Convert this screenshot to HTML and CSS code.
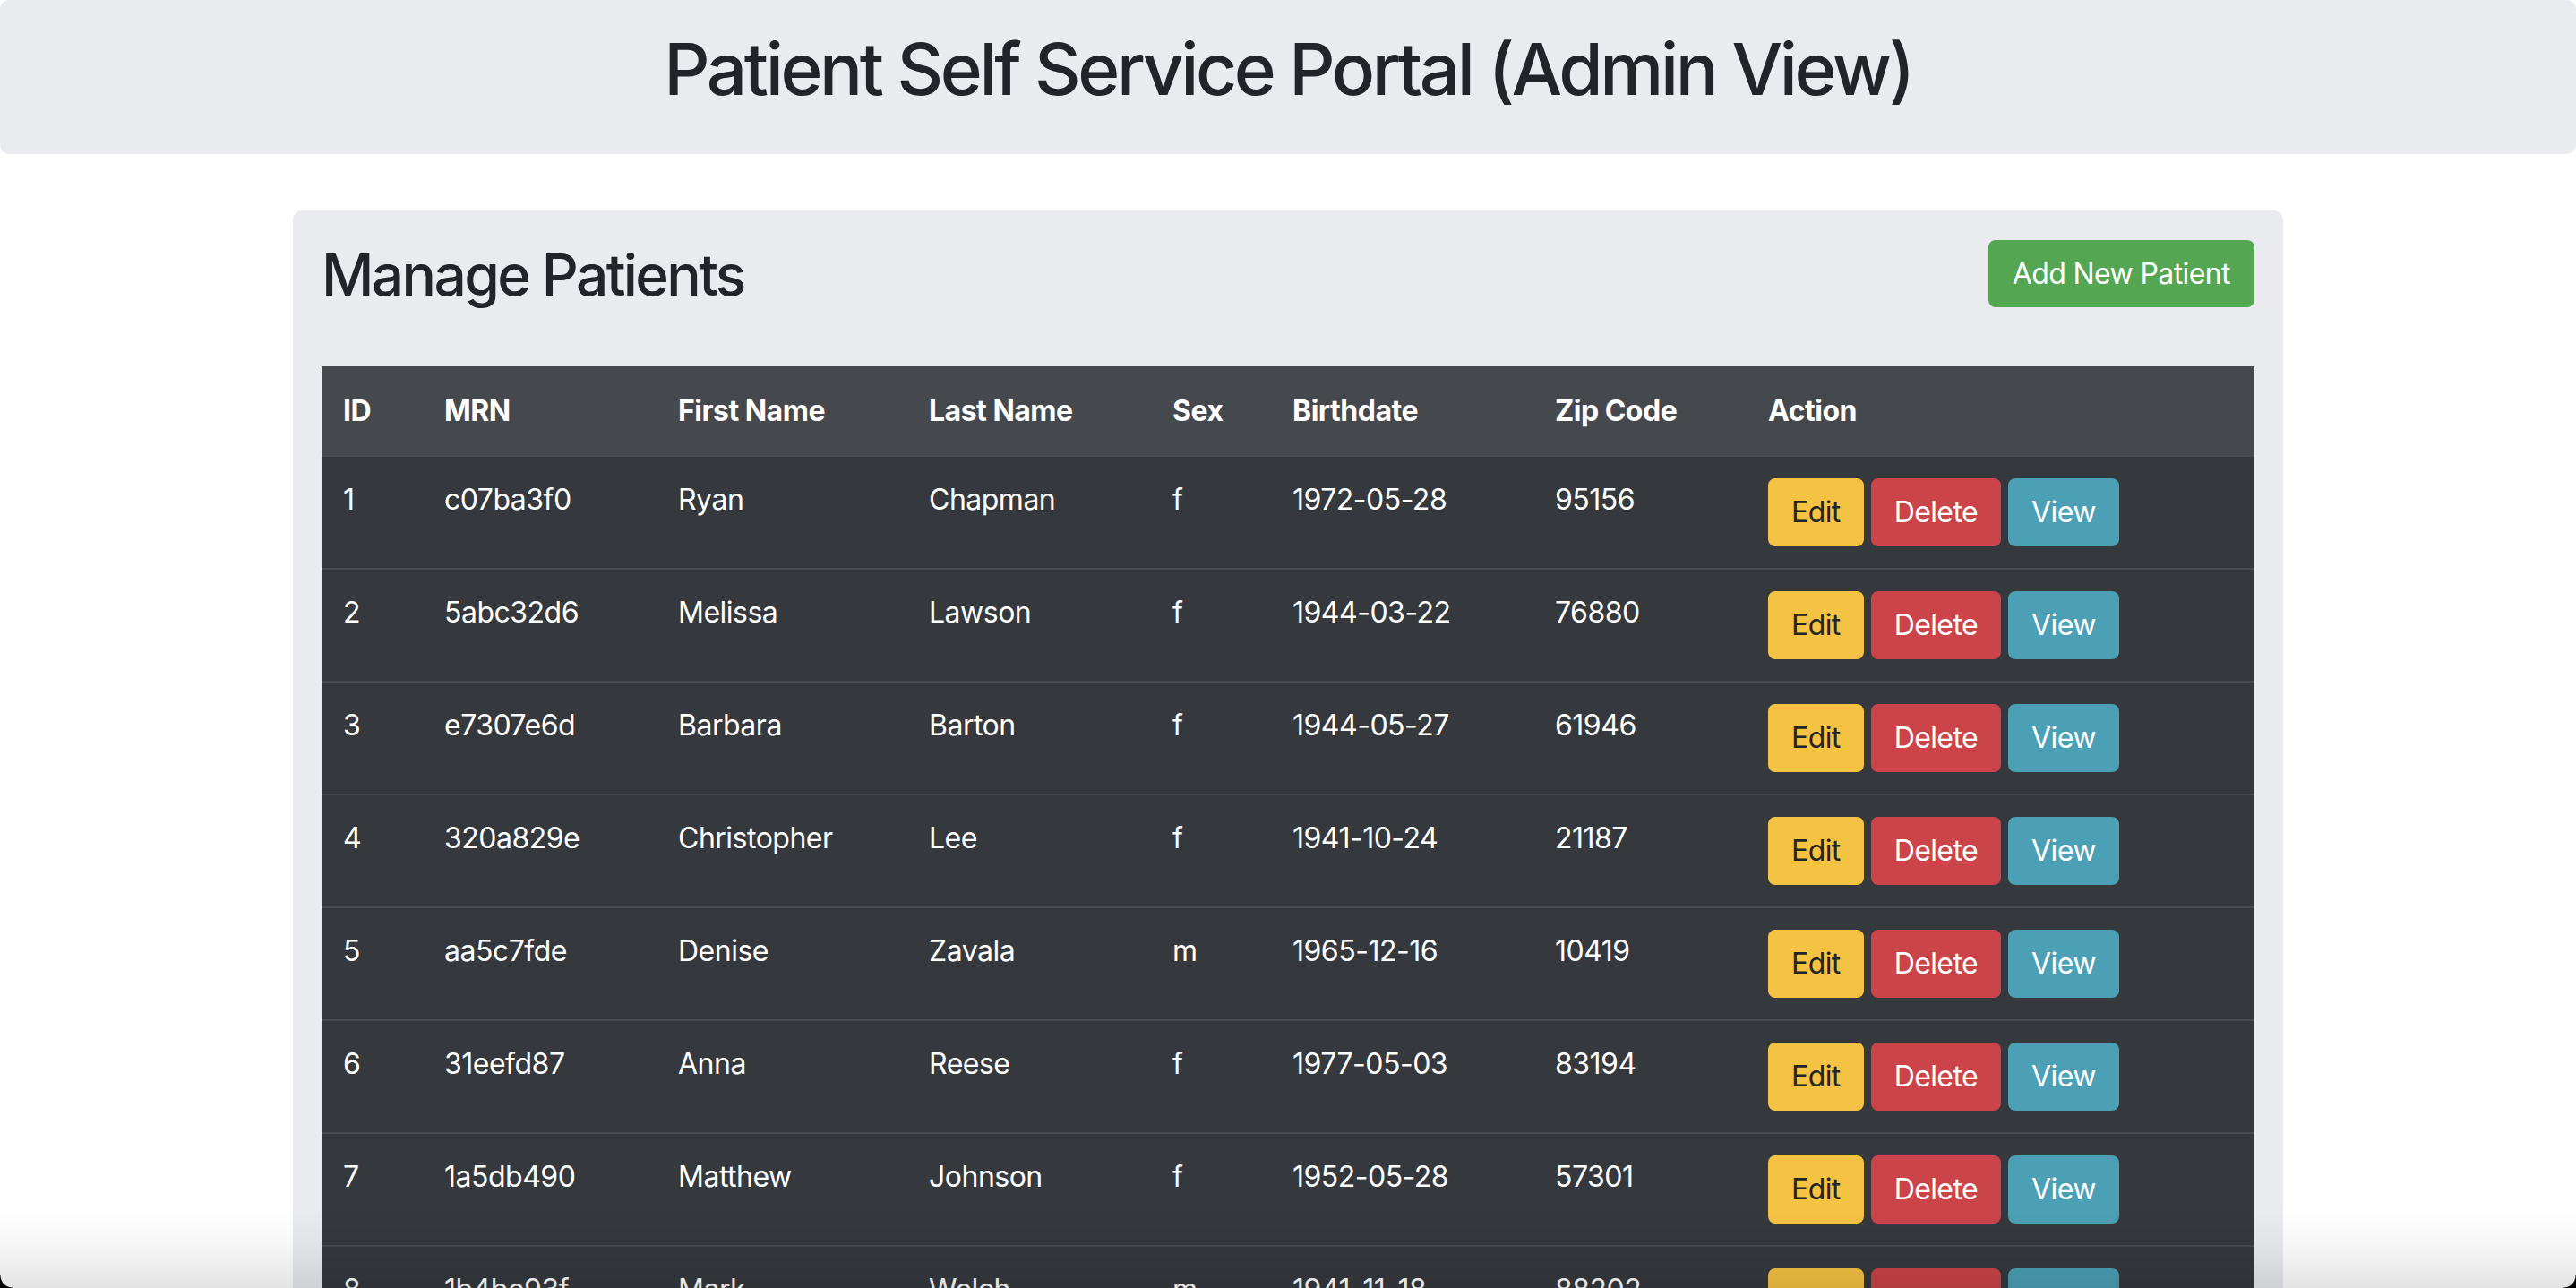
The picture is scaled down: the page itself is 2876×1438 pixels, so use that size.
FILE: index.html
```html
<!DOCTYPE html>
<html lang="en">
<head>
<meta charset="utf-8">
<title>Patient Self Service Portal (Admin View)</title>
<link rel="stylesheet" href="styles.css">
</head>
<body>
<header class="jumbo">
  <h1 class="title">Patient Self Service Portal (Admin View)</h1>
</header>
<main class="card">
  <div class="card-head">
    <h2 class="card-title">Manage Patients</h2>
    <button class="btn btn-success">Add New Patient</button>
  </div>
  <table class="table">
    <colgroup>
      <col class="c-id"><col class="c-mrn"><col class="c-first"><col class="c-last"><col class="c-sex"><col class="c-birth"><col class="c-zip"><col class="c-action">
    </colgroup>
    <thead>
      <tr><th>ID</th><th>MRN</th><th>First Name</th><th>Last Name</th><th>Sex</th><th>Birthdate</th><th>Zip Code</th><th>Action</th></tr>
    </thead>
    <tbody>
      <tr><td>1</td><td>c07ba3f0</td><td>Ryan</td><td>Chapman</td><td>f</td><td>1972-05-28</td><td>95156</td><td><div class="actions"><button class="btn btn-warning">Edit</button><button class="btn btn-danger">Delete</button><button class="btn btn-info">View</button></div></td></tr>
      <tr><td>2</td><td>5abc32d6</td><td>Melissa</td><td>Lawson</td><td>f</td><td>1944-03-22</td><td>76880</td><td><div class="actions"><button class="btn btn-warning">Edit</button><button class="btn btn-danger">Delete</button><button class="btn btn-info">View</button></div></td></tr>
      <tr><td>3</td><td>e7307e6d</td><td>Barbara</td><td>Barton</td><td>f</td><td>1944-05-27</td><td>61946</td><td><div class="actions"><button class="btn btn-warning">Edit</button><button class="btn btn-danger">Delete</button><button class="btn btn-info">View</button></div></td></tr>
      <tr><td>4</td><td>320a829e</td><td>Christopher</td><td>Lee</td><td>f</td><td>1941-10-24</td><td>21187</td><td><div class="actions"><button class="btn btn-warning">Edit</button><button class="btn btn-danger">Delete</button><button class="btn btn-info">View</button></div></td></tr>
      <tr><td>5</td><td>aa5c7fde</td><td>Denise</td><td>Zavala</td><td>m</td><td>1965-12-16</td><td>10419</td><td><div class="actions"><button class="btn btn-warning">Edit</button><button class="btn btn-danger">Delete</button><button class="btn btn-info">View</button></div></td></tr>
      <tr><td>6</td><td>31eefd87</td><td>Anna</td><td>Reese</td><td>f</td><td>1977-05-03</td><td>83194</td><td><div class="actions"><button class="btn btn-warning">Edit</button><button class="btn btn-danger">Delete</button><button class="btn btn-info">View</button></div></td></tr>
      <tr><td>7</td><td>1a5db490</td><td>Matthew</td><td>Johnson</td><td>f</td><td>1952-05-28</td><td>57301</td><td><div class="actions"><button class="btn btn-warning">Edit</button><button class="btn btn-danger">Delete</button><button class="btn btn-info">View</button></div></td></tr>
      <tr><td>8</td><td>1b4be93f</td><td>Mark</td><td>Welch</td><td>m</td><td>1941-11-18</td><td>88202</td><td><div class="actions"><button class="btn btn-warning">Edit</button><button class="btn btn-danger">Delete</button><button class="btn btn-info">View</button></div></td></tr>
    </tbody>
  </table>
</main>
<div class="window-shade"><span class="corner corner-left"></span><span class="corner corner-right"></span></div>
</body>
</html>
```
FILE: styles.css
```css
html {
  overflow: hidden;
}
body {
  margin: 0;
  background: #ffffff;
  color: #212529;
  font-family: Inter, "Noto Sans", "Liberation Sans", sans-serif;
  font-size: 32px;
  line-height: 48px;
}
.jumbo {
  box-sizing: border-box;
  height: 172px;
  padding: 29px 0 0;
  background: #e9ebef;
  border-radius: 10px;
  text-align: center;
}
.title {
  margin: 0;
  font-size: 80px;
  line-height: 96px;
  font-weight: 500;
  color: #212529;
  letter-spacing: -3.4px;
}
.card {
  display: block;
  width: 2222px;
  margin: 63px auto 0;
  padding: 32px;
  box-sizing: border-box;
  background: #e9ebef;
  border-radius: 10px;
}
.card-head {
  display: flex;
  justify-content: space-between;
  align-items: flex-start;
  margin-bottom: 65px;
}
.card-title {
  margin: 0;
  padding-top: 2px;
  font-size: 64px;
  line-height: 75px;
  font-weight: 500;
  color: #212529;
  letter-spacing: -2.6px;
}
.btn {
  display: inline-block;
  box-sizing: border-box;
  height: 76px;
  padding: 12px 24px;
  border: 2px solid transparent;
  border-radius: 8px;
  font-family: inherit;
  font-size: 32px;
  line-height: 48px;
  font-weight: 400;
  color: #ffffff;
  letter-spacing: -0.6px;
  cursor: pointer;
}
.btn-success {
  margin-top: 1px;
  background: #54a653;
  border-color: #54a653;
  height: 75px;
  padding: 11px 25px;
}
.btn-warning {
  background: #f5c343;
  border-color: #f5c343;
  color: #212529;
}
.btn-danger {
  background: #cb444a;
  border-color: #cb444a;
}
.btn-info {
  background: #4ba0b5;
  border-color: #4ba0b5;
}
.table {
  width: 2158px;
  border-collapse: collapse;
  table-layout: fixed;
  background: #35393e;
  color: #ffffff;
  letter-spacing: -0.5px;
}
.c-id { width: 113px; }
.c-mrn { width: 261px; }
.c-first { width: 280px; }
.c-last { width: 272px; }
.c-sex { width: 134px; }
.c-birth { width: 293px; }
.c-zip { width: 238px; }
.c-action { width: 567px; }
.table th {
  padding: 26px 24px 25px;
  background: #45494e;
  text-align: left;
  font-weight: 700;
  vertical-align: top;
}
.table td {
  padding: 24px;
  border-top: 2px solid #474b51;
  vertical-align: top;
  white-space: nowrap;
}
.actions {
  display: flex;
  gap: 8px;
}
.window-shade {
  position: fixed;
  left: 0;
  right: 0;
  bottom: 0;
  height: 90px;
  background: linear-gradient(to bottom, rgba(0, 0, 0, 0) 0%, rgba(0, 0, 0, 0.03) 45%, rgba(0, 0, 0, 0.11) 100%);
  pointer-events: none;
}
.corner {
  position: absolute;
  bottom: 0;
  width: 14px;
  height: 14px;
}
.corner-left {
  left: 0;
  background: radial-gradient(circle at 100% 0, transparent 13px, #000 14px);
}
.corner-right {
  right: 0;
  background: radial-gradient(circle at 0 0, transparent 13px, #000 14px);
}
```
